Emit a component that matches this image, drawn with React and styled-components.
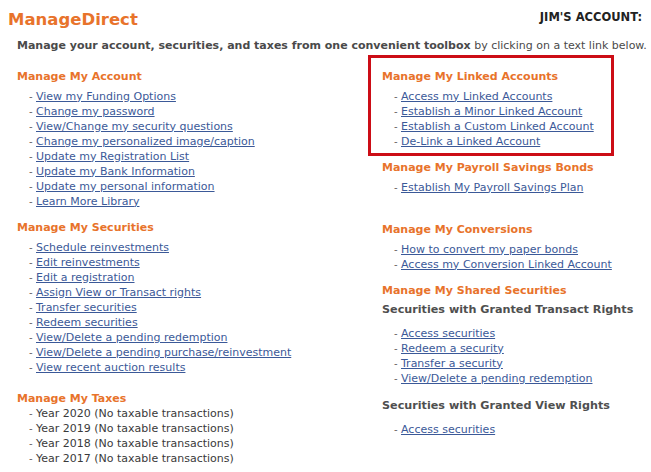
import React from "react";
import styled, { createGlobalStyle } from "styled-components";

const GlobalStyle = createGlobalStyle`
  body {
    margin: 0;
    background: #fff;
    font-family: "DejaVu Sans", Verdana, sans-serif;
    color: #4a4a4a;
  }
`;

const Page = styled.div`
  width: 651px;
  height: 472px;
  box-sizing: border-box;
  padding: 8px 9px 0 8px;
  overflow: hidden;
`;

const TopBar = styled.div`
  display: flex;
  justify-content: space-between;
  align-items: flex-start;
`;

const Title = styled.h1`
  margin: 0;
  font-size: 16.5px;
  line-height: 24px;
  font-weight: bold;
  color: #e8732b;
`;

const AccountName = styled.div`
  margin-top: 2px;
  font-size: 11.5px;
  line-height: 14px;
  font-weight: bold;
  color: #222;
`;

const Intro = styled.p`
  margin: 6px 0 0 9px;
  font-size: 11px;
  line-height: 15px;
  color: #4a4a4a;
  white-space: nowrap;
`;

const Columns = styled.div`
  display: grid;
  grid-template-columns: 360px 1fr;
`;

const Column = styled.div`
  display: flex;
  flex-direction: column;
  padding-left: ${(p) => p.$indent || 0}px;
`;

const Section = styled.section`
  margin-top: ${(p) => p.$top || 0}px;
`;

const Highlight = styled.section`
  border: 3px solid #cc0d16;
  width: 229px;
  padding: 10.5px 0 4.5px 11px;
  margin-top: 2px;
`;

const Heading = styled.h2`
  margin: 0 0 ${(p) => (p.$after === undefined ? 5 : p.$after)}px;
  font-size: 11px;
  line-height: 15px;
  font-weight: bold;
  color: #e8732b;
  white-space: nowrap;
`;

const SubHeading = styled.h3`
  margin: ${(p) => p.$top || 0}px 0 9px;
  font-size: 11.2px;
  line-height: 15px;
  font-weight: bold;
  color: #4f4f4f;
  white-space: nowrap;
`;

const List = styled.ul`
  list-style: none;
  margin: 0;
  padding: 0 0 0 12px;
`;

const Item = styled.li`
  font-size: 11px;
  line-height: 15px;
  color: #3a3a3a;
  white-space: nowrap;

  &::before {
    content: "-";
    display: inline-block;
    width: 7px;
    color: #666;
    font-size: 10px;
  }

  a {
    color: #3b5998;
    text-decoration: underline;
  }
`;

const Links = ({ items }) => (
  <List>
    {items.map((t) => (
      <Item key={t}>
        <a href="#">{t}</a>
      </Item>
    ))}
  </List>
);

const account = [
  "View my Funding Options",
  "Change my password",
  "View/Change my security questions",
  "Change my personalized image/caption",
  "Update my Registration List",
  "Update my Bank Information",
  "Update my personal information",
  "Learn More Library",
];

const securities = [
  "Schedule reinvestments",
  "Edit reinvestments",
  "Edit a registration",
  "Assign View or Transact rights",
  "Transfer securities",
  "Redeem securities",
  "View/Delete a pending redemption",
  "View/Delete a pending purchase/reinvestment",
  "View recent auction results",
];

const years = ["2020", "2019", "2018", "2017"];

const App = () => {
  return (
    <Page>
      <GlobalStyle />
      <TopBar>
        <Title>ManageDirect</Title>
        <AccountName>JIM'S ACCOUNT:</AccountName>
      </TopBar>
      <Intro>
        <b>Manage your account, securities, and taxes from one convenient toolbox</b> by
        clicking on a text link below.
      </Intro>
      <Columns>
        <Column $indent={9}>
          <Section $top={15.5}>
            <Heading>Manage My Account</Heading>
            <Links items={account} />
          </Section>
          <Section $top={11}>
            <Heading>Manage My Securities</Heading>
            <Links items={securities} />
          </Section>
          <Section $top={16}>
            <Heading $after={0}>Manage My Taxes</Heading>
            <List>
              {years.map((y) => (
                <Item key={y}>Year {y} (No taxable transactions)</Item>
              ))}
            </List>
          </Section>
        </Column>
        <Column>
          <Highlight>
            <Heading>Manage My Linked Accounts</Heading>
            <Links
              items={[
                "Access my Linked Accounts",
                "Establish a Minor Linked Account",
                "Establish a Custom Linked Account",
                "De-Link a Linked Account",
              ]}
            />
          </Highlight>
          <Column $indent={14}>
            <Section $top={3.5}>
              <Heading>Manage My Payroll Savings Bonds</Heading>
              <Links items={["Establish My Payroll Savings Plan"]} />
            </Section>
            <Section $top={27}>
              <Heading>Manage My Conversions</Heading>
              <Links
                items={[
                  "How to convert my paper bonds",
                  "Access my Conversion Linked Account",
                ]}
              />
            </Section>
            <Section $top={11}>
              <Heading $after={4}>Manage My Shared Securities</Heading>
              <SubHeading>Securities with Granted Transact Rights</SubHeading>
              <Links
                items={[
                  "Access securities",
                  "Redeem a security",
                  "Transfer a security",
                  "View/Delete a pending redemption",
                ]}
              />
              <SubHeading $top={12}>Securities with Granted View Rights</SubHeading>
              <Links items={["Access securities"]} />
            </Section>
          </Column>
        </Column>
      </Columns>
    </Page>
  );
};

export default App;
